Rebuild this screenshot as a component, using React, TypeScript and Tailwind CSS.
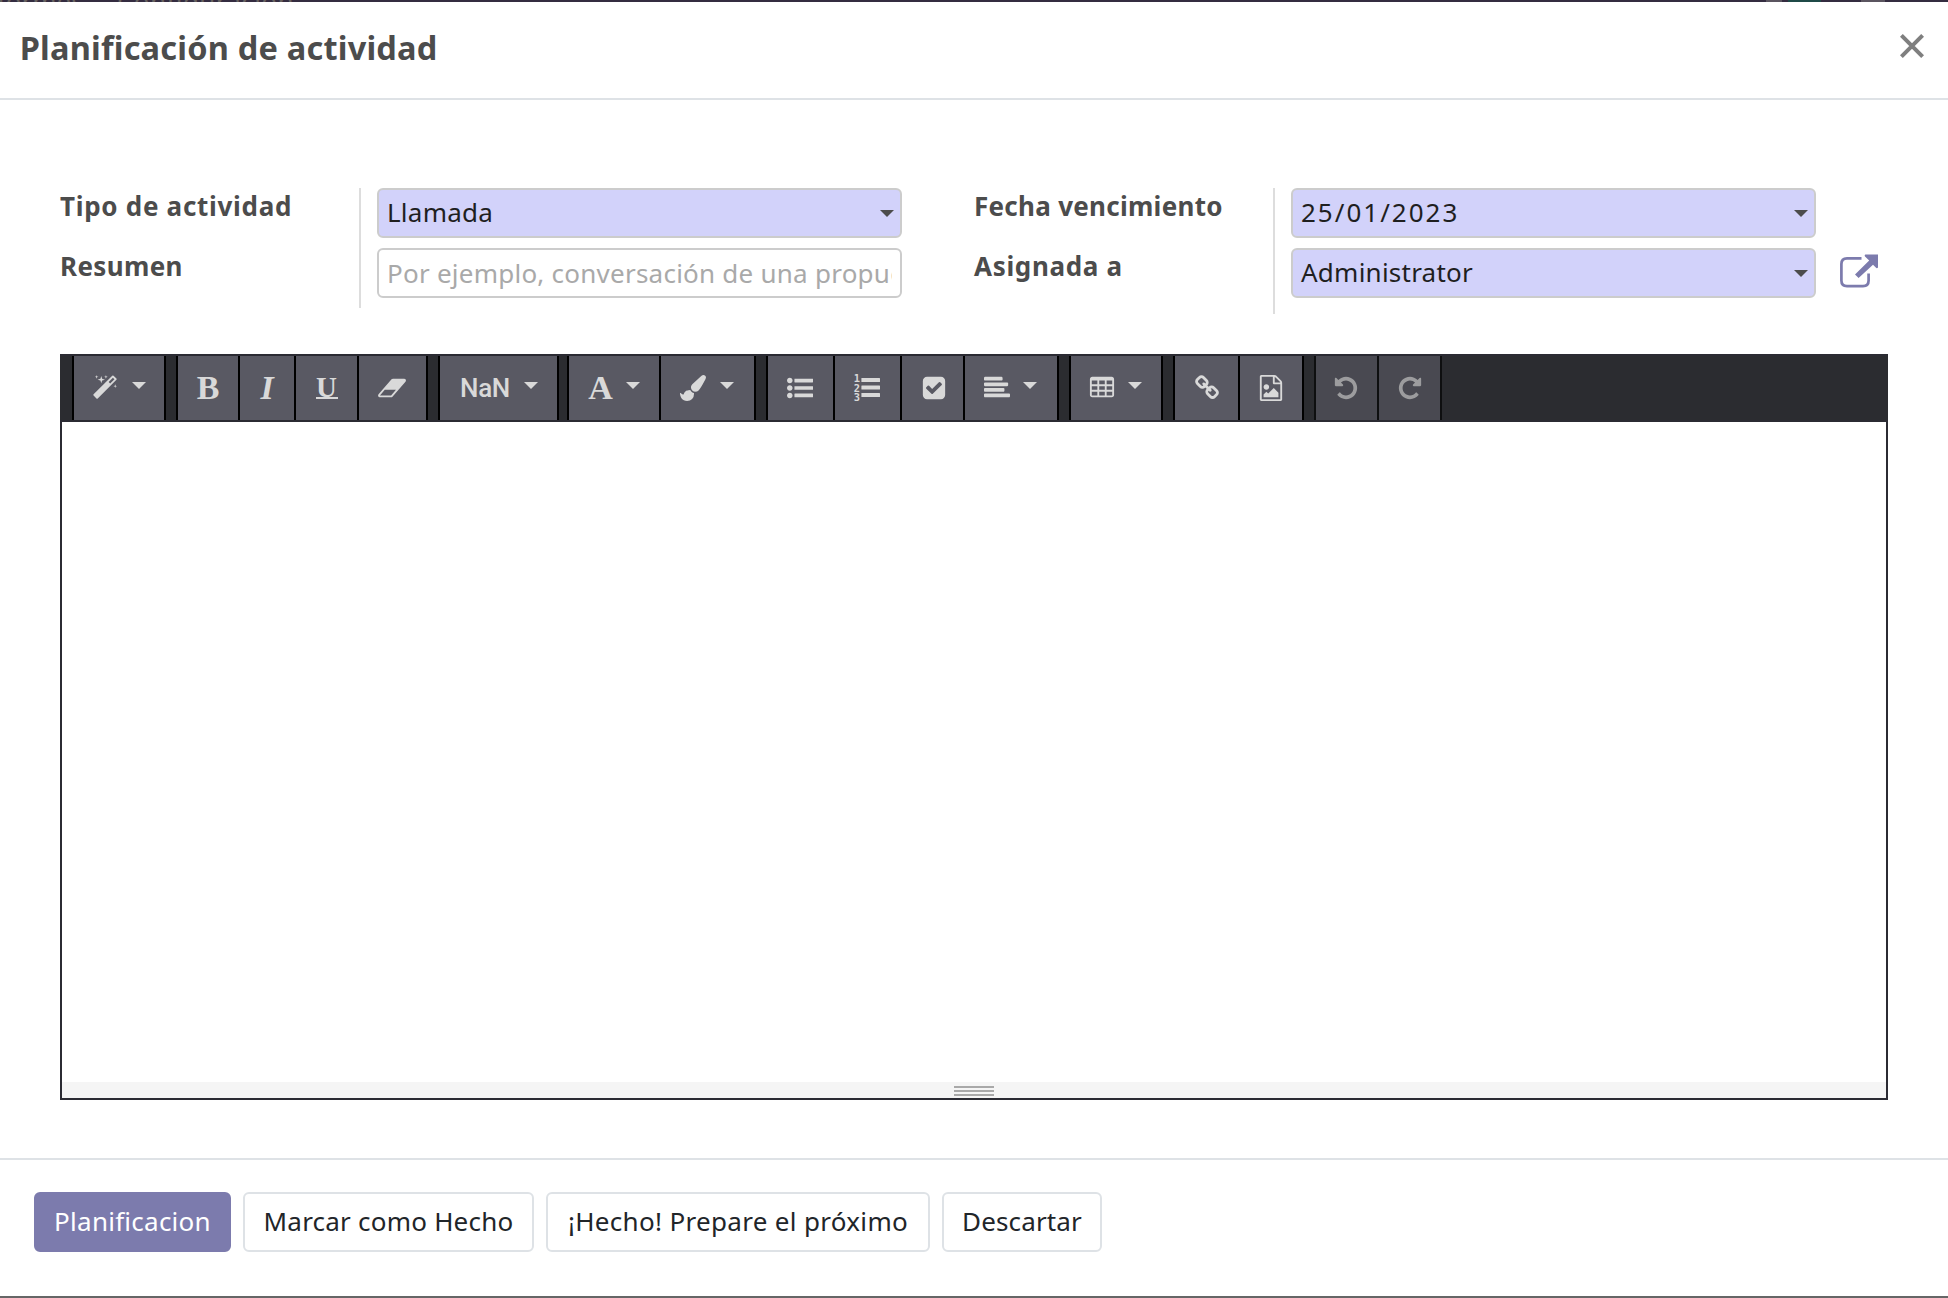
import type { ReactNode } from "react";

const PATHS = {
  magic:
    "M1254 581l293-293-107-107-293 293zm447-293q0 27-18 45l-1286 1286q-18 18-45 18t-45-18l-198-198q-18-18-18-45t18-45l1286-1286q18-18 45-18t45 18l198 198q18 18 18 45zm-1351-190l98 30-98 30-30 98-30-98-98-30 98-30 30-98zm350 162l196 60-196 60-60 196-60-196-196-60 196-60 60-196zm930 478l98 30-98 30-30 98-30-98-98-30 98-30 30-98zm-640-640l98 30-98 30-30 98-30-98-98-30 98-30 30-98z",
  eraser:
    "M832 1408l336-384h-768l-336 384h768zm1013-1077q15 34 9.5 71.5t-30.5 65.5l-896 1024q-38 44-96 44h-768q-38 0-69.5-20.5t-47.5-54.5q-15-34-9.5-71.5t30.5-65.5l896-1024q38-44 96-44h768q38 0 69.5 20.5t47.5 54.5z",
  brush:
    "M1615 0q70 0 122.5 46.5t52.5 116.5q0 63-45 151-332 629-465 752-97 91-218 91-126 0-216.5-92.5t-90.5-219.5q0-128 92-212l638-579q59-54 130-54zm-909 1034q39 76 106.5 130t150.5 76l1 71q4 213-129.5 347t-348.5 134q-123 0-218-46.5t-152.5-127.5-86.5-183-29-220q7 5 41 30t62 44.5 59 36.5 46 17q41 0 55-37 25-66 57.5-112.5t69.5-76 88-47.5 103-25.5 125-10.5z",
  listUl:
    "M384 1408q0 80-56 136t-136 56-136-56-56-136 56-136 136-56 136 56 56 136zm0-512q0 80-56 136t-136 56-136-56-56-136 56-136 136-56 136 56 56 136zm1408 416v192q0 13-9.5 22.5t-22.5 9.5h-1216q-13 0-22.5-9.5t-9.5-22.5v-192q0-13 9.5-22.5t22.5-9.5h1216q13 0 22.5 9.5t9.5 22.5zm-1408-928q0 80-56 136t-136 56-136-56-56-136 56-136 136-56 136 56 56 136zm1408 416v192q0 13-9.5 22.5t-22.5 9.5h-1216q-13 0-22.5-9.5t-9.5-22.5v-192q0-13 9.5-22.5t22.5-9.5h1216q13 0 22.5 9.5t9.5 22.5zm0-512v192q0 13-9.5 22.5t-22.5 9.5h-1216q-13 0-22.5-9.5t-9.5-22.5v-192q0-13 9.5-22.5t22.5-9.5h1216q13 0 22.5 9.5t9.5 22.5z",
  check:
    "M813 1299l614-614q19-19 19-45t-19-45l-102-102q-19-19-45-19t-45 19l-467 467-211-211q-19-19-45-19t-45 19l-102 102q-19 19-19 45t19 45l358 358q19 19 45 19t45-19zm851-883v960q0 119-84.5 203.5t-203.5 84.5h-960q-119 0-203.5-84.5t-84.5-203.5v-960q0-119 84.5-203.5t203.5-84.5h960q119 0 203.5 84.5t84.5 203.5z",
  alignLeft:
    "M1792 1344v128q0 26-19 45t-45 19h-1664q-26 0-45-19t-19-45v-128q0-26 19-45t45-19h1664q26 0 45 19t19 45zm-384-384v128q0 26-19 45t-45 19h-1280q-26 0-45-19t-19-45v-128q0-26 19-45t45-19h1280q26 0 45 19t19 45zm256-384v128q0 26-19 45t-45 19h-1536q-26 0-45-19t-19-45v-128q0-26 19-45t45-19h1536q26 0 45 19t19 45zm-384-384v128q0 26-19 45t-45 19h-1152q-26 0-45-19t-19-45v-128q0-26 19-45t45-19h1152q26 0 45 19t19 45z",
  table:
    "M224 128h1344q66 0 113 47t47 113v1088q0 66-47 113t-113 47h-1344q-66 0-113-47t-47-113v-1088q0-66 47-113t113-47zM192 384v256h384v-256zM704 384v256h384v-256zM1216 384v256h384v-256zM192 768v256h384v-256zM704 768v256h384v-256zM1216 768v256h384v-256zM192 1152v256h384v-256zM704 1152v256h384v-256zM1216 1152v256h384v-256z",
  link:
    "M1520 1216q0-40-28-68l-208-208q-28-28-68-28-42 0-72 32 3 3 19 18.5t21.5 21.5 15 19 13 25.5 3.5 27.5q0 40-28 68t-68 28q-15 0-27.5-3.5t-25.5-13-19-15-21.5-21.5-18.5-19q-33 31-33 73 0 40 28 68l206 207q27 27 68 27 40 0 68-26l147-146q28-28 28-67zm-703-705q0-40-28-68l-206-207q-28-28-68-28-39 0-68 27l-147 146q-28 28-28 67 0 40 28 68l208 208q27 27 68 27 42 0 72-31-3-3-19-18.5t-21.5-21.5-15-19-13-25.5-3.5-27.5q0-40 28-68t68-28q15 0 27.5 3.5t25.5 13 19 15 21.5 21.5 18.5 19q33-31 33-73zm895 705q0 120-85 203l-147 146q-83 83-203 83-121 0-204-85l-206-207q-83-83-83-203 0-123 88-209l-88-88q-86 88-208 88-120 0-204-84l-208-208q-84-84-84-204t85-203l147-146q83-83 203-83 121 0 204 85l206 207q83 83 83 203 0 123-88 209l88 88q86-88 208-88 120 0 204 84l208 208q84 84 84 204z",
  image:
    "M1596 380q28 28 48 76t20 88v1152q0 40-28 68t-68 28h-1344q-40 0-68-28t-28-68v-1600q0-40 28-68t68-28h896q40 0 88 20t76 48zm-444-244v376h376q-10-29-22-41l-313-313q-12-12-41-22zm384 1528v-1024h-416q-40 0-68-28t-28-68v-416h-768v1536h1280zm-128-448v320h-1024v-192l192-192 128 128 384-384zm-832-192q-80 0-136-56t-56-136 56-136 136-56 136 56 56 136-56 136-136 56z",
  undo:
    "M1664 896q0 156-61 298t-164 245-245 164-298 61q-172 0-327-72.5t-264-204.5q-7-10-6.5-22.5t8.5-20.5l137-138q10-9 25-9 16 2 23 12 73 95 179 147t225 52q104 0 198.5-40.5t163.5-109.5 109.5-163.5 40.5-198.5-40.5-198.5-109.5-163.5-163.5-109.5-198.5-40.5q-98 0-188 35.5t-160 101.5l137 138q31 30 14 69-17 40-59 40h-448q-26 0-45-19t-19-45v-448q0-42 40-59 39-17 69 14l130 129q107-101 244.5-156.5t284.5-55.5q156 0 298 61t245 164 164 245 61 298z",
};

function Glyph({ name, className = "" }: { name: keyof typeof PATHS; className?: string }) {
  return (
    <svg
      viewBox="0 0 1792 1792"
      fill="currentColor"
      fillRule="evenodd"
      className={`size-[26px] shrink-0 overflow-visible ${className}`}
    >
      <path d={PATHS[name]} />
    </svg>
  );
}

function NumberedList() {
  return (
    <svg viewBox="0 0 26 26" fill="currentColor" className="size-[26px] shrink-0 overflow-visible">
      <rect x="7.4" y="3" width="18.6" height="4" rx="0.5" />
      <rect x="7.4" y="10.5" width="18.6" height="4" rx="0.5" />
      <rect x="7.4" y="18" width="18.6" height="4" rx="0.5" />
      <g fontFamily="DejaVu Sans Mono" fontWeight="700" fontSize="10.4" textAnchor="middle">
        <text x="2.9" y="7.2">1</text>
        <text x="2.9" y="16.5">2</text>
        <text x="2.9" y="25.9">3</text>
      </g>
    </svg>
  );
}

function Caret({ className = "" }: { className?: string }) {
  return (
    <svg viewBox="0 0 14 7" fill="currentColor" className={`h-[7px] w-3.5 shrink-0 ${className}`}>
      <path d="M0 0h14L7 7z" />
    </svg>
  );
}

function Tool({ className, children }: { className: string; children: ReactNode }) {
  return (
    <button
      className={`box-content flex h-16 shrink-0 items-center border-r-2 border-black bg-[#595963] text-[#d9d9d9] ${className}`}
    >
      {children}
    </button>
  );
}

function ToolGroup({ className = "", children }: { className?: string; children: ReactNode }) {
  return <div className={`flex border-l-2 border-black ${className}`}>{children}</div>;
}

function Toolbar() {
  return (
    <div className="flex h-[68px] shrink-0 border-y-2 border-[#2b2b33] bg-[#2b2c30] pl-3">
      <ToolGroup>
        <Tool className="w-[72px] pl-[18px]">
          <Glyph name="magic" />
          <Caret className="mt-[-5px] ml-3.5" />
        </Tool>
      </ToolGroup>
      <ToolGroup className="ml-2.5">
        <Tool className="w-[60px] justify-center">
          <span className="font-['Liberation_Serif',serif] text-[34px] leading-[34px] font-bold">B</span>
        </Tool>
        <Tool className="w-[54px] justify-center">
          <span className="font-['Liberation_Serif',serif] text-[34px] leading-[34px] font-bold italic">I</span>
        </Tool>
        <Tool className="w-[61px] justify-center">
          <span className="flex w-[22px] flex-col items-center border-b-2 border-current">
            <span className="h-5 font-['Liberation_Serif',serif] text-[29px] leading-[21px] font-bold">U</span>
          </span>
        </Tool>
        <Tool className="w-[47px] pl-5">
          <Glyph name="eraser" />
        </Tool>
      </ToolGroup>
      <ToolGroup className="ml-2.5">
        <Tool className="w-[97px] pl-5">
          <span className="w-[50px] font-['Roboto',sans-serif] text-[26px] leading-8 font-medium tracking-[-0.3px]">
            NaN
          </span>
          <Caret className="mt-[-5px] ml-3.5" />
        </Tool>
      </ToolGroup>
      <ToolGroup className="ml-2">
        <Tool className="w-[72px] pl-[18px]">
          <span className="w-[26px] pl-px font-['Liberation_Serif',serif] text-[34px] leading-[34px] font-bold">A</span>
          <Caret className="mt-[-5px] ml-[13px]" />
        </Tool>
        <Tool className="w-[74px] pl-[19px]">
          <Glyph name="brush" />
          <Caret className="mt-[-5px] ml-3.5" />
        </Tool>
      </ToolGroup>
      <ToolGroup className="ml-2.5">
        <Tool className="w-[46px] pl-[19px]">
          <Glyph name="listUl" />
        </Tool>
        <Tool className="w-[46px] pl-[19px]">
          <NumberedList />
        </Tool>
        <Tool className="w-[42px] pl-[19px]">
          <Glyph name="check" />
        </Tool>
        <Tool className="w-[73px] pl-[19px]">
          <Glyph name="alignLeft" />
          <Caret className="mt-[-5px] ml-[13px]" />
        </Tool>
      </ToolGroup>
      <ToolGroup className="ml-2.5">
        <Tool className="w-[72px] pl-[18px]">
          <Glyph name="table" />
          <Caret className="mt-[-5px] ml-[13px]" />
        </Tool>
      </ToolGroup>
      <ToolGroup className="ml-2.5">
        <Tool className="w-[44px] pl-[19px]">
          <Glyph name="link" />
        </Tool>
        <Tool className="w-[44px] pl-[18px]">
          <Glyph name="image" />
        </Tool>
      </ToolGroup>
      <ToolGroup className="ml-2.5 opacity-65">
        <Tool className="w-[44px] pl-[17px]">
          <Glyph name="undo" />
        </Tool>
        <Tool className="w-[43px] pl-[18px]">
          <Glyph name="undo" className="-scale-x-100" />
        </Tool>
      </ToolGroup>
    </div>
  );
}

function Label({ className = "", children }: { className?: string; children: ReactNode }) {
  return <div className={`h-[60px] leading-9 font-bold text-[#4c4c4c] ${className}`}>{children}</div>;
}

function Field({ value, className }: { value: string; className: string }) {
  return (
    <div className="flex h-[50px] w-[525px] items-center justify-between rounded-[6px] border-2 border-[#cccccc] bg-[#d2d2fa] px-[6px] text-[#1f1f1f]">
      <span className={`-mt-px pl-0.5 ${className}`}>{value}</span>
      <Caret className="text-[#4c4c4c]" />
    </div>
  );
}

function FooterButton({ className, children }: { className: string; children: ReactNode }) {
  return (
    <button
      className={`flex h-[60px] items-center justify-center rounded-[6px] border-2 pb-0.5 whitespace-nowrap ${className}`}
    >
      {children}
    </button>
  );
}

export default function App() {
  return (
    <div className="flex h-[1298px] w-[1948px] flex-col overflow-hidden bg-white font-['Noto_Sans',sans-serif] text-[26px] font-[450]">
      <div className="flex h-0.5 shrink-0 items-center overflow-hidden bg-[#342c40] text-[#67615f]">
        <span className="-ml-7 w-[145px] shrink-0">Informes</span>
        <span className="shrink-0 tracking-[0.4px]">Configuración</span>
        <span className="ml-auto h-0.5 w-4 shrink-0 bg-[#5b5560]" />
        <span className="ml-1.5 h-0.5 w-[33px] shrink-0 bg-[#1f4a47]" />
        <span className="mr-[63px] ml-10 h-0.5 w-6 shrink-0 bg-[#5b5560]" />
      </div>

      <header className="flex h-[98px] shrink-0 items-start justify-between border-b-2 border-[#dee2e6] pr-6 pl-[19.7px]">
        <h4 className="mt-[22px] text-[32.5px] leading-[47px] font-bold tracking-[0.21px] text-[#4c4c4c]">
          Planificación de actividad
        </h4>
        <svg viewBox="0 0 24 24" className="mt-8 size-6" stroke="#7f7f7f" strokeWidth="4" fill="none">
          <path d="M1.4 1.4l21.2 21.2M22.6 1.4L1.4 22.6" />
        </svg>
      </header>

      <main className="flex h-[1058px] shrink-0 flex-col px-[60px] pt-[88px]">
        <div className="flex h-[166px] shrink-0 items-start">
          <div className="flex w-[914px] items-start">
            <div className="h-[120px] w-[301px] border-r-2 border-[#dddddd]">
              <Label className="tracking-[0.71px]">Tipo de actividad</Label>
              <Label className="tracking-[0.35px]">Resumen</Label>
            </div>
            <div className="ml-4 flex flex-col gap-2.5">
              <Field value="Llamada" className="tracking-[0.25px]" />
              <div className="flex h-[50px] w-[525px] items-center rounded-[6px] border-2 border-[#cccccc] px-2">
                <input
                  className="-mt-px h-[42px] w-full bg-transparent tracking-[0.24px] outline-none placeholder:text-[#a9a9a9]"
                  placeholder="Por ejemplo, conversación de una propuesta"
                />
              </div>
            </div>
          </div>
          <div className="flex items-start">
            <div className="h-[126px] w-[301px] border-r-2 border-[#dddddd]">
              <Label className="tracking-[0.28px]">Fecha vencimiento</Label>
              <Label className="tracking-[0.67px]">Asignada a</Label>
            </div>
            <div className="ml-4 flex flex-col gap-2.5">
              <Field value="25/01/2023" className="tracking-[2px]" />
              <div className="flex items-center">
                <Field value="Administrator" className="tracking-[0.24px]" />
                <svg viewBox="0 0 39 34" className="mt-[-5px] ml-6 h-[34px] w-[39px]" fill="none">
                  <path
                    d="M21.5 4.4H7Q1.4 4.4 1.4 10v16.6Q1.4 32.2 7 32.2h16Q28.6 32.2 28.6 26.6V19.6"
                    stroke="#7c7bad"
                    strokeWidth="2.7"
                  />
                  <path
                    d="M25.4 0.4H38V13.4Q37 14.8 35.8 13.6L33 10.8 18.6 24 15 20.4 29.2 6.6 25 2.6Q24 1.2 25.4 0.4z"
                    fill="#7c7bad"
                  />
                </svg>
              </div>
            </div>
          </div>
        </div>

        <div className="flex h-[746px] w-[1828px] shrink-0 flex-col">
          <Toolbar />
          <div className="flex-1 border-x-2 border-[#2b2b33]" />
          <div className="flex h-[18px] shrink-0 flex-col items-center gap-0.5 border-x-2 border-b-2 border-[#2b2b33] bg-[#f5f5f5] pt-1">
            <div className="h-0.5 w-10 bg-[#a9a9a9]" />
            <div className="h-0.5 w-10 bg-[#a9a9a9]" />
            <div className="h-0.5 w-10 bg-[#a9a9a9]" />
          </div>
        </div>
      </main>

      <footer className="flex h-[138px] shrink-0 items-start gap-3 border-t-2 border-[#dee2e6] pt-8 pl-[34px] text-[#212529]">
        <FooterButton className="w-[197px] border-[#7c7bad] bg-[#7c7bad] tracking-[0.25px] text-white">
          Planificacion
        </FooterButton>
        <FooterButton className="w-[291px] border-[#dee2e6] tracking-[0.22px]">Marcar como Hecho</FooterButton>
        <FooterButton className="w-[384px] border-[#dee2e6] tracking-[0.32px]">
          ¡Hecho! Prepare el próximo
        </FooterButton>
        <FooterButton className="w-[160px] border-[#dee2e6] tracking-[0.15px]">Descartar</FooterButton>
      </footer>
      <div className="h-0.5 shrink-0 bg-[#666666]" />
    </div>
  );
}
